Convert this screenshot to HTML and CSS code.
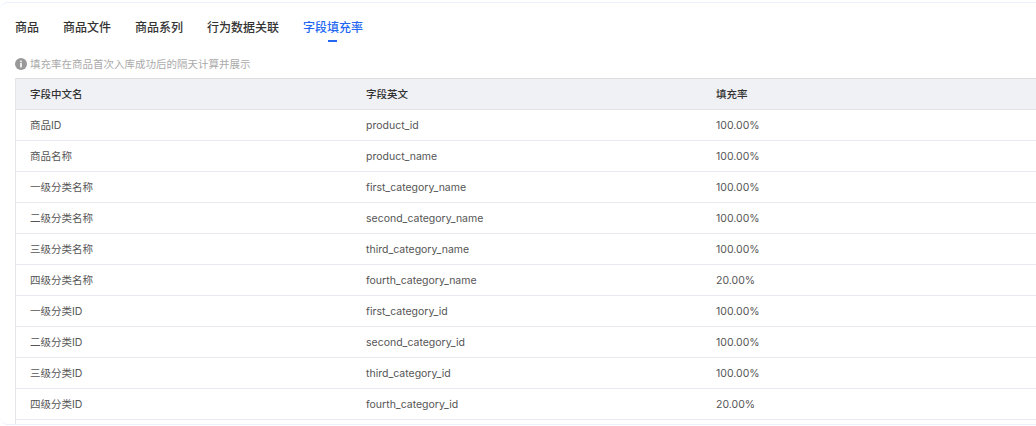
FILE: index.html
```html
<!DOCTYPE html>
<html lang="en">

<head>
    <meta charset="UTF-8">
    <title>字段填充率</title>
    <link rel="stylesheet" href="styles.css">
</head>

<body>
    <div class="panel">
        <ul class="tabs">
            <li>商品</li>
            <li>商品文件</li>
            <li>商品系列</li>
            <li>行为数据关联</li>
            <li class="active">字段填充率</li>
        </ul>
        <p class="tip">
            <svg class="tip-icon" viewBox="0 0 12 12">
                <circle cx="6" cy="6" r="6" fill="#999"></circle>
                <rect x="5.2" y="5" width="1.6" height="4.4" fill="#fff"></rect>
                <rect x="5.2" y="2.6" width="1.6" height="1.6" fill="#fff"></rect>
            </svg>
            填充率在商品首次入库成功后的隔天计算并展示
        </p>
        <div class="table-wrap">
            <table class="fill-table">
                <thead>
                    <tr>
                        <th class="col-cn">字段中文名</th>
                        <th class="col-en">字段英文</th>
                        <th>填充率</th>
                    </tr>
                </thead>
                <tbody>
                    <tr><td>商品ID</td><td>product_id</td><td>100.00%</td></tr>
                    <tr><td>商品名称</td><td>product_name</td><td>100.00%</td></tr>
                    <tr><td>一级分类名称</td><td>first_category_name</td><td>100.00%</td></tr>
                    <tr><td>二级分类名称</td><td>second_category_name</td><td>100.00%</td></tr>
                    <tr><td>三级分类名称</td><td>third_category_name</td><td>100.00%</td></tr>
                    <tr><td>四级分类名称</td><td>fourth_category_name</td><td>20.00%</td></tr>
                    <tr><td>一级分类ID</td><td>first_category_id</td><td>100.00%</td></tr>
                    <tr><td>二级分类ID</td><td>second_category_id</td><td>100.00%</td></tr>
                    <tr><td>三级分类ID</td><td>third_category_id</td><td>100.00%</td></tr>
                    <tr><td>四级分类ID</td><td>fourth_category_id</td><td>20.00%</td></tr>
                    <tr><td></td><td></td><td></td></tr>
                </tbody>
            </table>
        </div>
    </div>
</body>

</html>
```

FILE: styles.css
```css
html,
body,
ul,
li,
p {
    padding: 0;
    margin: 0;
}

html,
body {
    height: 426px;
    overflow: hidden;
    background: #fff;
}

body {
    font-family: "Inter", "Noto Sans CJK SC", sans-serif;
    color: #333;
}

li {
    list-style: none;
}

.panel {
    box-sizing: border-box;
    height: 423px;
    margin-top: 2px;
    padding-left: 15px;
    border-top: 1px solid #eaf1fb;
    border-bottom: 1px solid #eaf1fb;
    border-radius: 8px 0 0 8px;
    overflow: hidden;
}

.tabs {
    display: flex;
    gap: 24px;
    height: 41px;
    padding-top: 15px;
    box-sizing: border-box;
    font-size: 12px;
    line-height: 20px;
    font-weight: 500;
}

.tabs li {
    position: relative;
}

.tabs .active {
    color: #2468f2;
}

.tabs .active::after {
    content: "";
    position: absolute;
    left: 50%;
    bottom: 2px;
    width: 9px;
    height: 2px;
    margin-left: -5px;
    background: #2468f2;
}

.tip {
    display: flex;
    align-items: center;
    gap: 3px;
    height: 34px;
    padding-top: 5px;
    box-sizing: border-box;
    font-size: 10.5px;
    color: #aaa;
}

.tip-icon {
    width: 12px;
    height: 12px;
}

.table-wrap {
    border-left: 1px solid #e6e6ea;
}

.fill-table {
    width: 1100px;
    table-layout: fixed;
    border-collapse: collapse;
    font-size: 10.5px;
    line-height: 16px;
}

.fill-table th,
.fill-table td {
    height: 31px;
    padding: 2px 14px 0;
    box-sizing: border-box;
    text-align: left;
}

.fill-table th {
    font-weight: 500;
    background: #f0f1f5;
    border-top: 1px solid #dcdcdc;
    border-bottom: 1px solid #e4e4e8;
}

.fill-table td {
    color: #555;
    border-bottom: 1px solid #e8e8ee;
}

.col-cn {
    width: 336px;
}

.col-en {
    width: 350px;
}
```
